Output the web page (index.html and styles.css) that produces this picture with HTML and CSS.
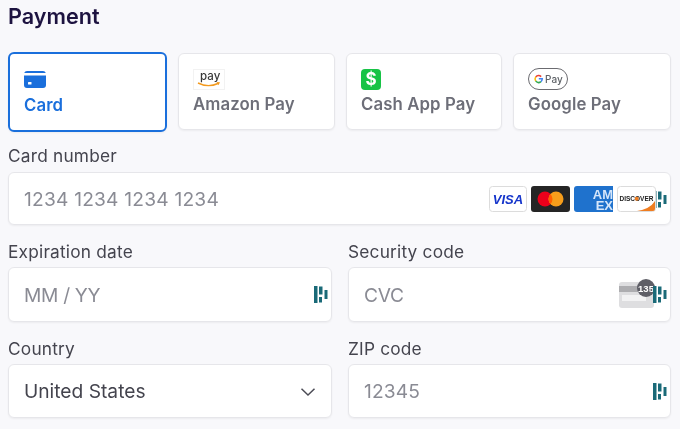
FILE: index.html
```html
<!DOCTYPE html>
<html lang="en">
<head>
<meta charset="utf-8">
<title>Payment</title>
<link rel="stylesheet" href="styles.css">
</head>
<body>
<main class="form">
  <h1 class="title">Payment</h1>
  <div class="tabs">
    <div class="tab tab-active">
      <svg class="tab-icon" width="22" height="17" viewBox="0 0 22 17"><path fill="#1a6fdc" d="M3 0h16a3 3 0 0 1 2.800 2H.2A3 3 0 0 1 3 0zM0 4.500h22V14a3 3 0 0 1-3 3H3a3 3 0 0 1-3-3z"/><rect x="4" y="11" width="3.500" height="2.500" rx=".5" fill="#fff"/></svg>
      <span>Card</span>
    </div>
    <div class="tab">
      <svg class="tab-icon" width="32" height="21" viewBox="0 0 32 21"><rect x=".5" y=".5" width="31" height="20" fill="#fff" stroke="#f2f2f2"/><text x="7" y="10.500" class="amz">pay</text><path d="M5 14q10 5 20 .5" fill="none" stroke="#f39a1e" stroke-width="1.400"/><path d="M23.500 13l3.500 .3-1.500 3z" fill="#f39a1e"/></svg>
      <span>Amazon Pay</span>
    </div>
    <div class="tab">
      <svg class="tab-icon" width="20" height="21" viewBox="0 0 20 21"><rect width="20" height="21" rx="4" fill="#17c346"/><text x="10" y="16" class="cash">$</text></svg>
      <span>Cash App Pay</span>
    </div>
    <div class="tab">
      <svg class="tab-icon tab-icon-gpay" width="40" height="22" viewBox="0 0 40 22"><rect x=".5" y=".5" width="39" height="21" rx="10.500" fill="#fff" stroke="#6b6b70"/><path d="M13.200 8.600a3.900 3.900 0 0 0-5.500 .3" fill="none" stroke="#ea4335" stroke-width="1.500"/><path d="M7.700 8.900a3.900 3.900 0 0 0 0 4.200" fill="none" stroke="#fbbc05" stroke-width="1.500"/><path d="M7.700 13.100a3.900 3.900 0 0 0 5.300 .5" fill="none" stroke="#34a853" stroke-width="1.500"/><path d="M13 13.600a3.900 3.900 0 0 0 1.300-2.800H10.800" fill="none" stroke="#4285f4" stroke-width="1.500"/><text x="17" y="15" class="gpay">Pay</text></svg>
      <span>Google Pay</span>
    </div>
  </div>
  <div class="field">
    <label class="label">Card number</label>
    <div class="input input-card">
      <span class="placeholder digits">1234 1234 1234 1234</span>
      <svg class="pm" width="14" height="17" viewBox="0 0 14 17"><use href="#pm-mark"/></svg>
      <div class="brands">
        <svg width="38" height="26" viewBox="0 0 38 26"><rect x=".5" y=".5" width="37" height="25" rx="3" fill="#fff" stroke="#dcdcdc"/><text x="19" y="18" class="visa">VISA</text></svg>
        <svg width="39" height="26" viewBox="0 0 39 26"><rect width="39" height="26" rx="3" fill="#252525"/><circle cx="14" cy="13" r="7.500" fill="#eb001b"/><circle cx="25" cy="13" r="7.500" fill="#f79e1b"/><path d="M19.500 7.900a7.500 7.500 0 0 1 0 10.200a7.500 7.500 0 0 1 0-10.200z" fill="#ff5f00"/></svg>
        <svg width="39" height="26" viewBox="0 0 39 26"><path d="M3 0h36v26H3a3 3 0 0 1-3-3V3a3 3 0 0 1 3-3z" fill="#1f72cd"/><text x="39" y="13" class="amex">AM</text><text x="39" y="24" class="amex">EX</text></svg>
        <svg width="39" height="26" viewBox="0 0 39 26"><rect x=".5" y=".5" width="38" height="25" rx="3" fill="#fff" stroke="#dcdcdc"/><path d="M20 25q13-2 18-10v8a2 2 0 0 1-2 2z" fill="#ef7d21"/><text x="19.500" y="15" class="disc">DISCOVER</text><circle cx="19.700" cy="12.800" r="2" fill="#ef7d21"/></svg>
      </div>
    </div>
  </div>
  <div class="row">
    <div class="field">
      <label class="label">Expiration date</label>
      <div class="input input-tall"><span class="placeholder">MM / YY</span><svg class="pm" width="14" height="17" viewBox="0 0 14 17"><use href="#pm-mark"/></svg></div>
    </div>
    <div class="field">
      <label class="label">Security code</label>
      <div class="input input-tall">
        <span class="placeholder">CVC</span>
        <svg class="cvc" width="36" height="30" viewBox="0 0 36 30"><rect x="0" y="3" width="35" height="26" rx="3" fill="#dedee0"/><rect x="0" y="7" width="35" height="6" fill="#adadb0"/><rect x="3" y="16" width="24" height="6" fill="#f2f2f3"/><circle cx="27" cy="9" r="9" fill="#5e5e66"/><text x="27" y="12.500" class="cvc-num">135</text></svg>
        <svg class="pm" width="14" height="17" viewBox="0 0 14 17"><use href="#pm-mark"/></svg>
      </div>
    </div>
  </div>
  <div class="row">
    <div class="field">
      <label class="label">Country</label>
      <div class="input"><span class="value">United States</span><svg class="chevron" width="16" height="10" viewBox="0 0 16 10"><path d="M1.500 1.800L8 8l6.500-6.200" fill="none" stroke="#4b4b55" stroke-width="1.500"/></svg></div>
    </div>
    <div class="field">
      <label class="label">ZIP code</label>
      <div class="input"><span class="placeholder digits-short">12345</span><svg class="pm" width="14" height="17" viewBox="0 0 14 17"><use href="#pm-mark"/></svg></div>
    </div>
  </div>
</main>
<svg class="defs" width="0" height="0"><defs><g id="pm-mark" fill="#1a6a78"><path d="M0 0h3.500v17H0z"/><path d="M5 .5h3.500v8H5z"/><path d="M5 11h3v5.500H5z"/><path d="M10.500 4h3v9h-3z"/></g></defs></svg>
</body>
</html>
```
FILE: styles.css
```css
* { box-sizing: border-box; }
html, body { margin: 0; height: 100%; }
body {
  background: #f8f8fb;
  font-family: Inter, "Liberation Sans", sans-serif;
  color: #44444e;
  overflow: hidden;
}
.form { width: 663px; margin-left: 8px; padding-top: 3px; filter: blur(.35px); }
.title {
  margin: 0 0 23px;
  font-size: 21.6px;
  line-height: 26px;
  font-weight: 600;
  color: #1d1340;
}
.tabs {
  display: grid;
  grid-template-columns: 159px 157px 156px 158px;
  column-gap: 11px;
  margin-bottom: 14px;
}
.tab {
  height: 77px;
  margin-top: 1px;
  padding: 15px 14px 0;
  background: #fff;
  border: 1px solid #e6e6ea;
  border-radius: 6px;
  box-shadow: 0 1px 2px rgba(0, 0, 0, .05);
  display: flex;
  flex-direction: column;
  align-items: flex-start;
  font-size: 16.8px;
  line-height: 20px;
  letter-spacing: .1px;
  font-weight: 600;
  color: #6d6e78;
}
.tab-icon { display: block; height: 21px; margin-bottom: 4px; }
.tab-icon-gpay { height: 22px; margin-top: -1px; }
.tab-active {
  height: 80px;
  margin-top: 0;
  padding-top: 17px;
  border: 2px solid #1a6fdc;
  color: #1a6fdc;
}
.tab-active .tab-icon { height: 17px; margin-bottom: 7px; }
.field { display: flex; flex-direction: column; }
.label {
  font-size: 17.3px;
  line-height: 20px;
  letter-spacing: .2px;
  color: #44444e;
  margin-bottom: 5px;
}
.input {
  position: relative;
  height: 54px;
  display: flex;
  align-items: center;
  padding: 0 15px;
  background: #fff;
  border: 1px solid #e6e6ea;
  border-radius: 6px;
  box-shadow: 0 1px 2px rgba(0, 0, 0, .05);
  font-size: 19.2px;
}
.input-card { height: 53px; margin-top: 1px; }
.input-tall { height: 55px; }
.placeholder { color: #8a8b94; letter-spacing: -.3px; }
.digits { letter-spacing: .2px; }
.digits-short { letter-spacing: .1px; }
.value { color: #44444e; }
.row {
  display: grid;
  grid-template-columns: 324px 323px;
  column-gap: 16px;
  margin-top: 17px;
}
.brands {
  position: absolute;
  right: 14px;
  top: 13px;
  display: flex;
  gap: 3px;
}
.brands svg { display: block; margin-left: 1px; }
.pm { position: absolute; right: 3px; top: 18px; }
.cvc { position: absolute; right: 15px; top: 11px; }
.chevron { position: absolute; right: 15px; top: 22px; }
.defs { position: absolute; }
.amz { font: 500 11.500px Inter, sans-serif; fill: #3a3a3a; }
.cash { font: 700 17px Inter, sans-serif; fill: #fff; text-anchor: middle; }
.gpay { font: 500 10px Inter, sans-serif; fill: #5f6368; }
.visa { font: italic 800 13px "Liberation Sans", sans-serif; fill: #1434cb; text-anchor: middle; }
.amex { font: 700 13px "Liberation Sans", sans-serif; fill: #d5e6fa; text-anchor: end; }
.disc { font: 700 6.500px "Liberation Sans", sans-serif; fill: #222; text-anchor: middle; }
.cvc-num { font: 700 9.500px "Liberation Sans", sans-serif; fill: #fff; text-anchor: middle; }
```
